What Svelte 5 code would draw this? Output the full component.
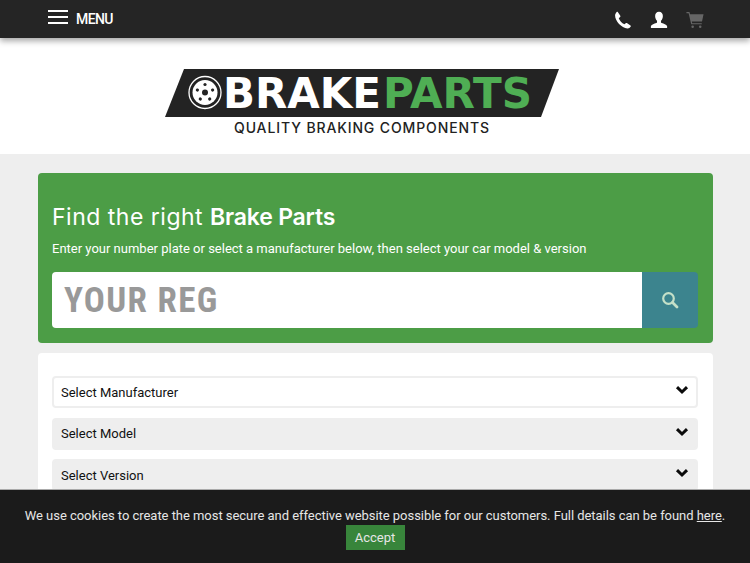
<script>
	const selects = [
		{ label: 'Select Manufacturer', active: true },
		{ label: 'Select Model', active: false },
		{ label: 'Select Version', active: false }
	];
	const bolts = [0, 72, 144, 216, 288];
</script>

<div class="page">
	<header class="topbar">
		<button class="menu">
			<span class="burger"><i></i><i></i><i></i></span>
			<span>MENU</span>
		</button>
		<div class="tools">
			<svg class="phone" viewBox="0 0 20 20" width="18" height="18">
				<path fill="#fff" d="M4.2 1.2 7 5.4c.3.5.2 1-.2 1.4L5.300 8c1 2.600 3.300 5.300 6.300 6.800l1.400-1.300c.4-.3.900-.4 1.300-.1l4 2.600c.5.300.6.900.3 1.300-.9 1.500-2.200 2.300-3.700 2.200C8.300 18.900 1.300 11.400 1.200 5.100 1.200 3.600 2 2.300 3 1.100c.4-.3.900-.3 1.200.1z" />
			</svg>
			<svg class="user" viewBox="0 0 20 20" width="18" height="18">
				<path fill="#fff" d="M10 .8c2.700 0 4.300 2 4.300 4.800 0 2.200-.9 4.200-2.100 5.300v1.500c0 .5.300.8.800 1 2.400.9 5 1.700 6 3.300v2.200H1v-2.200c1-1.600 3.600-2.400 6-3.300.5-.2.800-.5.800-1v-1.500C6.600 9.800 5.700 7.800 5.700 5.600 5.700 2.800 7.300.8 10 .8z" />
			</svg>
			<svg class="cart" viewBox="0 0 20 20" width="18" height="18">
				<path fill="#666" d="M.5 1h3.300l.7 2.500h15l-1.700 8.300H6.500l.4 1.700h10.600v1.300H5.800L2.900 2.400H.5z" />
				<circle fill="#666" cx="7.400" cy="17.600" r="1.400" />
				<circle fill="#666" cx="15.800" cy="17.600" r="1.400" />
			</svg>
		</div>
	</header>

	<div class="brand">
		<svg class="logo" viewBox="0 0 394 68" width="394" height="68">
			<polygon points="19,0 394,0 376,48 0,48" fill="#232323" />
			<circle cx="40" cy="23.500" r="16" fill="none" stroke="#fff" stroke-width="1.300" />
			<circle cx="40" cy="23.500" r="12.500" fill="#fff" />
			<circle cx="40" cy="23.500" r="3" fill="#232323" />
			{#each bolts as angle}
				<circle cx="40" cy="15.500" r="1.600" fill="#232323" transform="rotate({angle} 40 23.500)" />
			{/each}
			<text class="word" x="58" y="39" textLength="158" lengthAdjust="spacingAndGlyphs" fill="#fff">BRAKE</text>
			<text class="word" x="218" y="39" textLength="149" lengthAdjust="spacingAndGlyphs" fill="#4fae54">PARTS</text>
			<text class="tag" x="69" y="64" textLength="255" fill="#222">QUALITY BRAKING COMPONENTS</text>
		</svg>
	</div>

	<main class="content">
		<section class="finder">
			<h1>Find the right <strong>Brake Parts</strong></h1>
			<p>Enter your number plate or select a manufacturer below, then select your car model &amp; version</p>
			<div class="reg">
				<div class="reg-input">YOUR REG</div>
				<button class="reg-go" aria-label="Search">
					<svg viewBox="0 0 18 18" width="18" height="18">
						<circle cx="7.500" cy="7.500" r="5.300" fill="none" stroke="#c4e0c8" stroke-width="2.200" />
						<path d="M11.500 11.500 16 16" stroke="#c4e0c8" stroke-width="2.800" stroke-linecap="round" />
					</svg>
				</button>
			</div>
		</section>

		<section class="picker">
			{#each selects as item}
				<div class="select" class:active={item.active}>
					<span>{item.label}</span>
					<svg viewBox="0 0 14 10" width="14" height="10">
						<path d="M2 2.200 7 7l5-4.800" fill="none" stroke="#0b0b0b" stroke-width="3" />
					</svg>
				</div>
			{/each}
		</section>
	</main>

	<div class="cookies">
		<p>We use cookies to create the most secure and effective website possible for our customers. Full details can be found <a href="#here">here</a>.</p>
		<button class="accept">Accept</button>
	</div>
</div>

<style>
	:global(body) {
		background: #eeeeee;
		font-family: Roboto, sans-serif;
	}

	.page {
		position: relative;
		height: 563px;
		overflow: hidden;
	}

	.topbar {
		position: relative;
		z-index: 1;
		display: flex;
		justify-content: space-between;
		align-items: center;
		height: 38px;
		padding: 0 46px 0 48px;
		background: #252525;
		box-shadow: 0 3px 6px rgba(0, 0, 0, 0.35);
	}

	.menu {
		display: flex;
		align-items: center;
		gap: 8px;
		padding: 0;
		border: 0;
		background: none;
		color: #fff;
		font: 500 14px Roboto, sans-serif;
		letter-spacing: -0.6px;
	}

	.burger {
		display: flex;
		flex-direction: column;
		gap: 4px;
		width: 20px;
		margin-top: -4px;
	}

	.burger i {
		display: block;
		height: 2px;
		background: #fff;
	}

	.tools {
		display: flex;
		align-items: center;
		gap: 18px;
		margin-top: 1px;
	}

	.brand {
		display: flex;
		justify-content: center;
		height: 116px;
		padding-top: 31px;
		box-sizing: border-box;
		background: #fff;
	}

	.logo {
		display: block;
		margin-left: -26px;
		flex: none;
	}

	.word {
		font: 700 43px "DejaVu Sans", sans-serif;
	}

	.tag {
		font: 500 14px Inter, sans-serif;
	}

	.content {
		display: flex;
		flex-direction: column;
		gap: 10px;
		margin: 19px 37px 0 38px;
	}

	.finder {
		padding: 28px 15px 15px 14px;
		border-radius: 4px;
		background: #4c9d46;
		color: #fff;
	}

	h1 {
		margin: 0;
		font: 400 23px/32px Inter, sans-serif;
		letter-spacing: 0.5px;
	}

	h1 strong {
		font-weight: 600;
		letter-spacing: -0.2px;
	}

	.finder p {
		margin: 8px 0 15px;
		font-size: 13px;
		line-height: 16px;
	}

	.reg {
		display: flex;
		height: 56px;
	}

	.reg-input {
		flex: 1;
		padding-left: 12px;
		border-radius: 4px 0 0 4px;
		background: #fff;
		color: #999;
		font: 700 35px/58px Roboto, sans-serif;
		font-stretch: condensed;
		letter-spacing: 1.300px;
	}

	.reg-go {
		display: flex;
		justify-content: center;
		align-items: center;
		width: 56px;
		padding: 0;
		border: 0;
		border-radius: 0 4px 4px 0;
		background: #3c848e;
	}

	.picker {
		display: flex;
		flex-direction: column;
		gap: 9.500px;
		padding: 23px 15px 60px 14px;
		border-radius: 4px;
		background: #fff;
	}

	.select {
		display: flex;
		justify-content: space-between;
		align-items: center;
		box-sizing: border-box;
		height: 32px;
		padding: 0 7px;
		border: 2px solid #eeeeee;
		border-radius: 4px;
		background: #eeeeee;
		color: #111;
		font-size: 13px;
	}

	.select svg {
		margin-bottom: 4px;
	}

	.select.active {
		background: #fff;
	}

	.cookies {
		position: absolute;
		left: 0;
		right: 0;
		bottom: 0;
		z-index: 2;
		display: flex;
		flex-direction: column;
		align-items: center;
		height: 74px;
		padding-top: 18px;
		box-sizing: border-box;
		border-top: 1px solid #aaa;
		background: rgba(24, 24, 24, 0.99);
		color: #e6e6e6;
		font-size: 13px;
		letter-spacing: -0.04px;
	}

	.cookies p {
		margin: 0 0 1px;
		line-height: 16px;
	}

	.cookies a {
		color: inherit;
	}

	.accept {
		width: 59px;
		height: 25px;
		padding: 0;
		border: 0;
		background: #38853b;
		color: #e6e6e6;
		font: 400 13px Roboto, sans-serif;
	}
</style>
